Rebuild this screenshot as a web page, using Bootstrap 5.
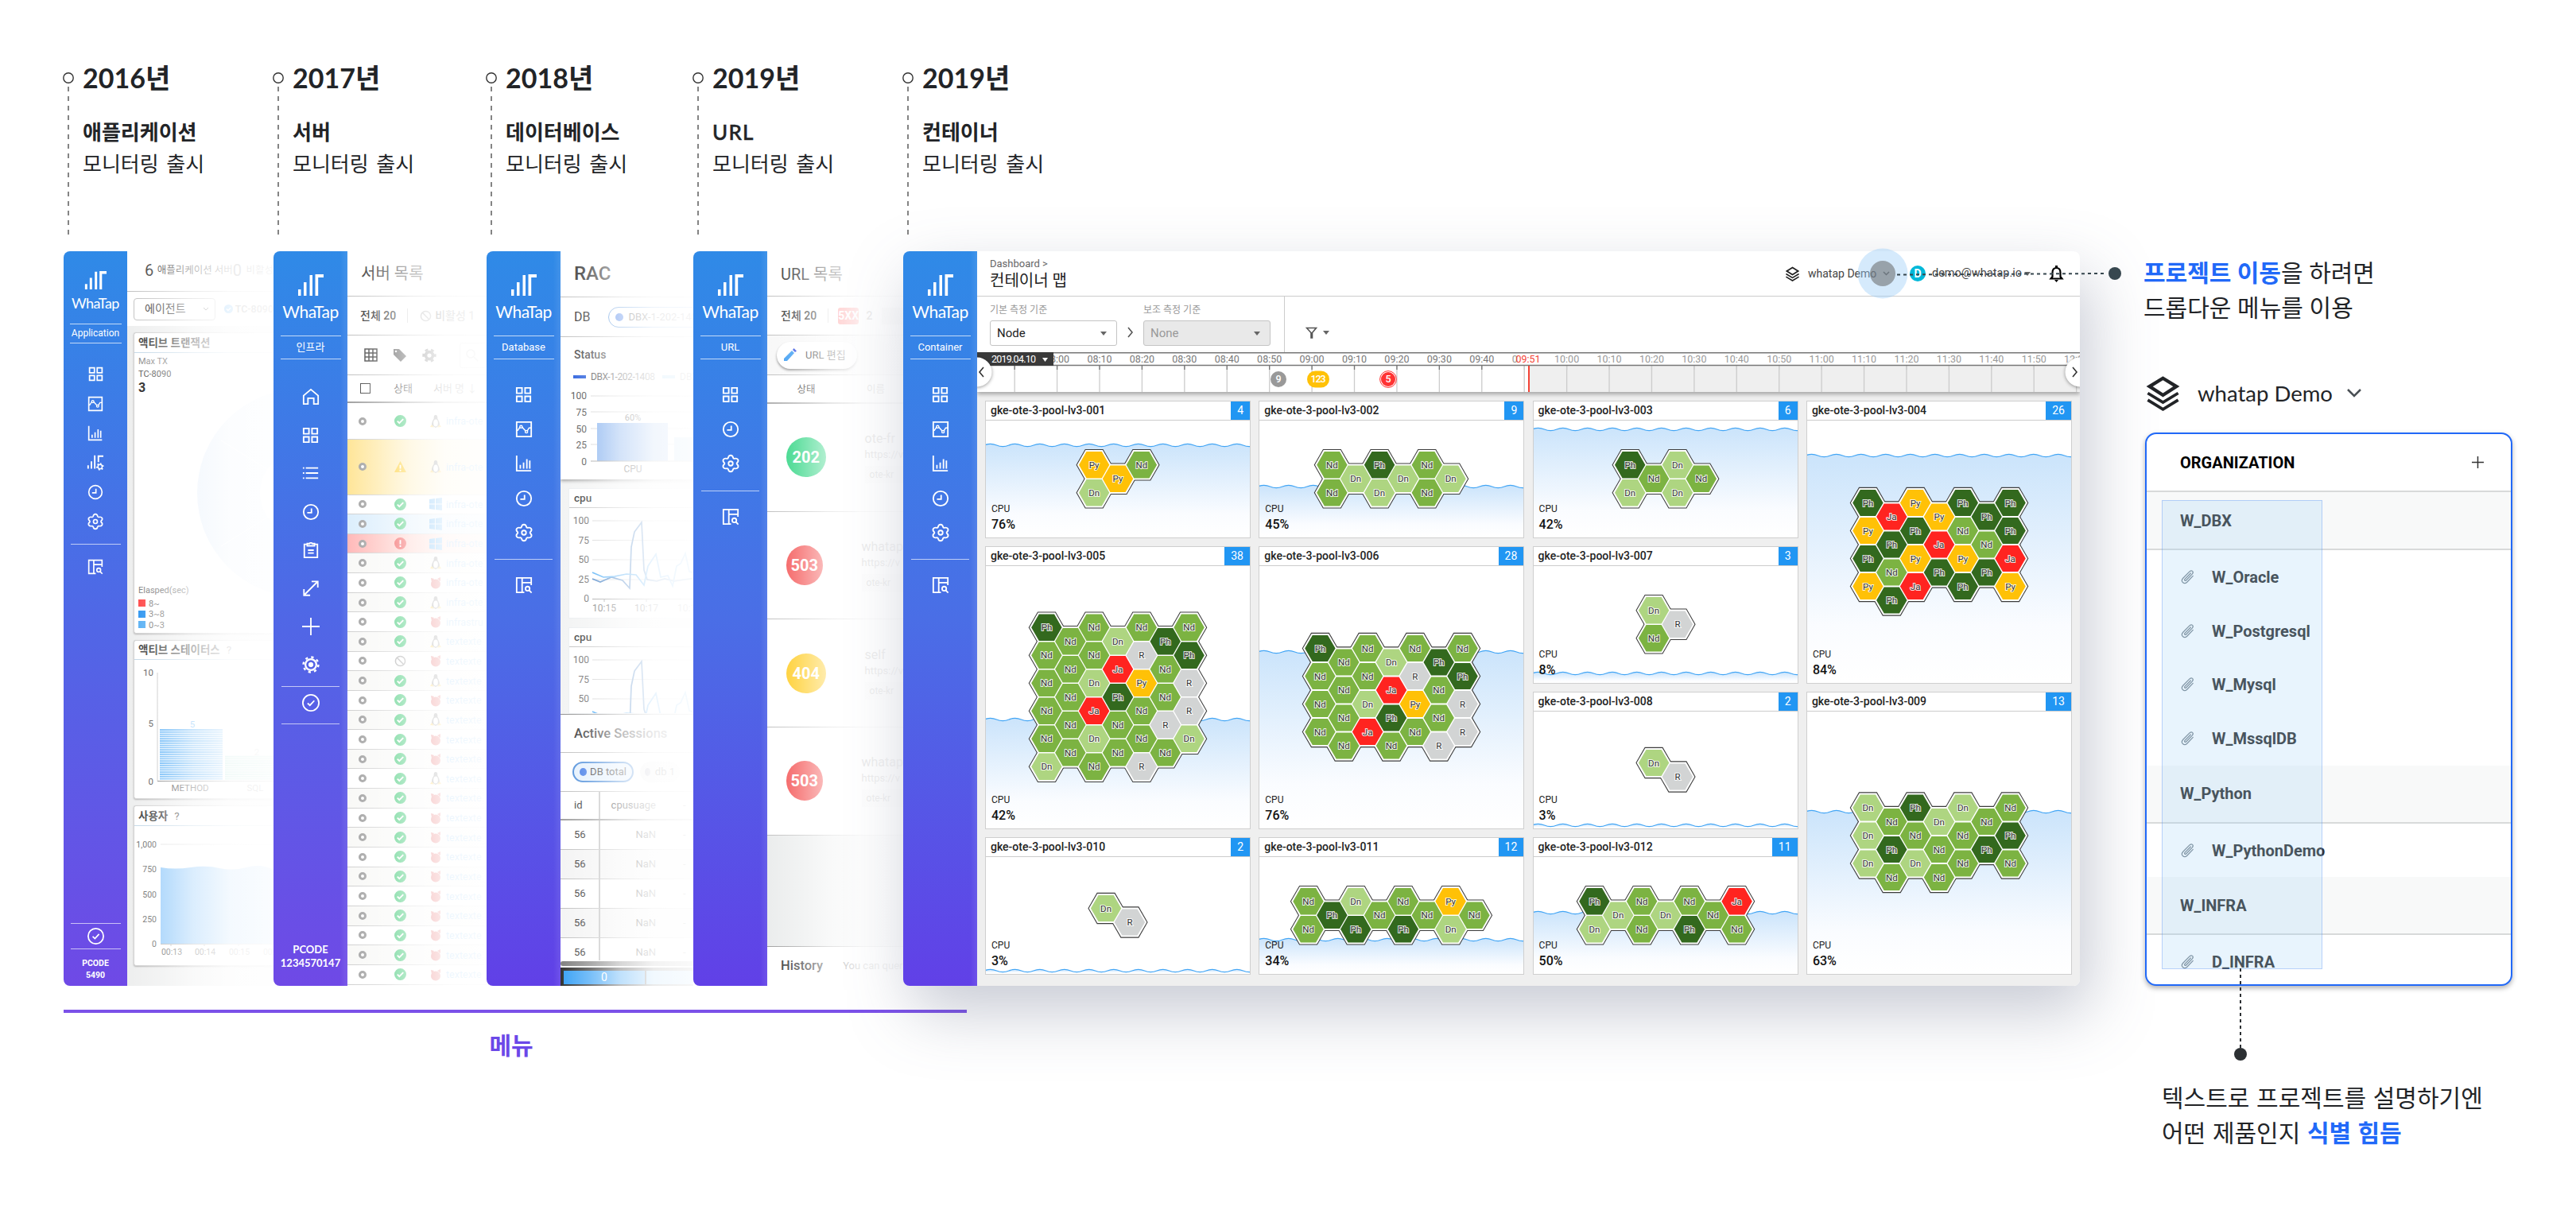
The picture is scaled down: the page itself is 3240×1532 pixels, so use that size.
<!DOCTYPE html>
<html lang="ko">
<head>
<meta charset="utf-8">
<title>WhaTap</title>
<link href="https://cdn.jsdelivr.net/npm/bootstrap@5.3.0/dist/css/bootstrap.min.css" rel="stylesheet">
<style>
html,body{width:3240px;height:1532px;overflow:hidden;background:#fff}
body{font-family:Roboto,"Noto Sans CJK KR",sans-serif;font-size:14px;line-height:1.2;color:#222;white-space:nowrap}
svg{display:block;flex:none}
.copy{font-family:Lato,"Noto Sans CJK KR",sans-serif;color:#222427}
.blue{color:#2169f8}
/* release history */
.history{height:316px;padding:0 0 0 80px}
.release{position:relative;padding:0 0 0 24px}
.release svg{position:absolute;left:-1px;top:90px}
.year{font-size:34px;font-weight:700;line-height:40px;margin-top:78px}
.prod{font-size:26px;font-weight:700;line-height:40px;margin-top:28px}
.prod.latin{letter-spacing:1.2px;font-weight:500;-webkit-text-stroke:.5px}
.rel-txt{font-size:26px;line-height:40px;word-spacing:3px}
/* product panels */
.stage{height:924px;padding-left:80px}
.panel{height:924px;flex:none}
.side{width:93px;flex:none;color:#fff;border-radius:8px 0 0 8px;background:linear-gradient(90deg,transparent 84px,rgba(255,255,255,.09)),linear-gradient(#2f8ae7,#4a6ee6 50%,#6140e7);font-size:13px;overflow:hidden}
.side.violet{background:linear-gradient(90deg,transparent 84px,rgba(255,255,255,.09)),linear-gradient(#2f8ae7,#5067e6 50%,#6f49e6)}
.side.slim{width:80px;font-size:12px}
.logo{margin-top:29px}.slim .logo{margin-top:25px}
.brand{font-family:Lato,sans-serif;font-size:21px;line-height:40px;letter-spacing:-.5px}
.slim .brand{font-size:18px;line-height:34px}
.kind{width:76px;height:30px;margin-top:10px;border:solid rgba(255,255,255,.7);border-width:1px 0;line-height:28px;text-align:center}
.slim .kind{width:65px;height:25px;line-height:22px;margin-top:9px}
.icons{margin-top:23px}
.slim .icons{margin-top:20px}
.rule-x{width:73px;height:1px;background:rgba(255,255,255,.65);flex:none}
.slim .rule-x{width:63px}
.pane{flex:1;min-width:0;overflow:hidden;position:relative;background:#fff}
.fade-over::after{content:"";position:absolute;inset:0;background:linear-gradient(90deg,rgba(255,255,255,.08),rgba(255,255,255,.36) 22%,rgba(255,255,255,.7) 45%,rgba(255,255,255,.91) 70%,rgba(255,255,255,.96))}
.line-b{border-bottom:1px solid #bbb}
.greybg{background:#eceded}
.tile{background:#fff;border:1px solid #ccc;border-radius:3px 0 0 3px;box-shadow:0 1px 2px #aaa;margin-left:8px;border-right:0}
.tile-h{height:25px;padding-left:5px;border-bottom:1px solid #bcd3e4;font-weight:700;font-size:13.5px}
.srow{height:24.65px;border-bottom:1px solid #ccc;padding-left:14px}
.srow:nth-child(even){background:#f8f8f6}
.ring{width:9px;height:9px;border:3px solid #999;border-radius:50%;margin-right:35px;flex:none;background:#fff}
.pill{height:26px;border:1px solid #3b82d6;border-radius:13px;padding:0 8px;gap:6px}
.pill i{width:10px;height:10px;border-radius:50%;background:#2b6be4}
.codedot{width:50px;height:50px;border-radius:50%;color:#fff;font-weight:700;font-size:20px}
/* container map */
.mainp{width:1480px;position:relative;border-radius:8px;box-shadow:12px 32px 80px rgba(90,100,130,.34)}
.mainp .pane{border-radius:0 8px 8px 0;background:#efefef}
.topbar{height:57px;background:#fff;border-bottom:1px solid #ccc;padding:0 20px 0 16px}
.filters{height:70px;background:#fff;padding-left:16px}
.pick{width:160px;height:32px;border:1px solid #c4c4c4;border-radius:3px;padding:0 12px 0 8px;font-size:15px}
.pick.off{background:#e9e9e9;color:#999}
.caret{width:0;height:0;border:4px solid transparent;border-top:5px solid #666;border-bottom:0}
.ruler{height:50px;box-shadow:0 3px 5px rgba(0,0,0,.3);position:relative;background:#fff}
.hexgrid{display:grid;grid-template-columns:repeat(4,334px);grid-template-rows:repeat(4,172.5px);gap:10.5px 10.3px;padding:11px 10px}
.hexcard{border:1px solid #cfcfcf;background:#fff;position:relative;overflow:hidden}
.hexhead{height:24px;border-bottom:1px solid #ccc;font-size:14px;font-weight:500;padding-left:6px}
.cnt{background:#2196f3;color:#fff;height:23px;line-height:23px;padding:0 8px;font-weight:400}
.cpu{position:absolute;left:7px;bottom:6px;font-size:12px;line-height:20px}
.cpu b{display:block;font-size:16px;font-weight:500;color:#111}
.marker-line{position:absolute;left:1200px;top:-6px}
/* right column */
.rightcol{margin-left:82px;width:462px}
.note{font-size:30px;line-height:43.5px}
.org{border:2px solid #2169f8;border-radius:14px;height:696px;margin-top:24px;overflow:hidden;position:relative;box-shadow:0 3px 6px rgba(0,0,0,.3);font-size:20px;font-weight:700;background:#fff}
.org>div{padding-left:42px}
.grp{height:73px;background:#f8f9f9;border-bottom:2px solid #d8dada;color:#333}
.itm{height:67.7px;color:#333;gap:20px}
.org .hl{position:absolute;left:19px;top:83px;width:202px;height:590px;padding:0;background:rgba(150,205,248,.22);border:1px solid rgba(35,104,245,.25)}
.leader{margin-left:112px;margin-top:-22px;position:relative}
.menu-line{width:1136px;height:4px;background:#7b51e8;margin:30px 0 0 80px}
.menu-txt{width:1136px;margin:16px 0 0 75px;font-size:30px;font-weight:700;color:#6b48e8;text-align:center;line-height:48px}
</style>
<script src="https://cdn.jsdelivr.net/npm/bootstrap@5.3.0/dist/js/bootstrap.bundle.min.js"></script>
</head>
<body>
<svg width="0" height="0" class="position-absolute">
<defs>
<linearGradient id="water" x1="0" y1="0" x2="0" y2="1"><stop offset="0" stop-color="#cbe4fb"/><stop offset=".75" stop-color="#fafcff"/><stop offset="1" stop-color="#fff"/></linearGradient>
<g id="s-grid" fill="none" stroke="currentColor" stroke-width="2"><path d="M3 3h7v7H3zM14 3h7v7h-7zM3 14h7v7H3zM14 14h7v7h-7z"/></g>
<g id="s-wave" fill="none" stroke="currentColor" stroke-width="2"><path d="M2 2h20v20H2z"/><path stroke-width="1.6" d="M2 13.5h1.500l3-4.500M9.500 9l4.500 5M16.600 14l2.400-4h3"/><circle cx="8" cy="8.500" r="1.700" stroke-width="1.500"/><circle cx="15.400" cy="15.300" r="1.700" stroke-width="1.500"/></g>
<g id="s-bars" fill="none" stroke="currentColor" stroke-width="2"><path d="M2 1v21h20M7 19v-5M11.500 19v-8.500M16 19V6M20 19V8"/></g>
<g id="s-bargear" fill="none" stroke="currentColor" stroke-width="2.300"><path d="M1 21v-5M6 21V10M11 21V1M16.500 11V2.100H24"/><circle cx="19" cy="18" r="3.200" stroke-width="1.800"/><path stroke-width="2.200" stroke-dasharray="2.100 2.700" d="M19 13.400a4.600 4.600 0 1 1 0 9.200a4.600 4.600 0 1 1 0-9.200"/></g>
<g id="s-clock" fill="none" stroke="currentColor" stroke-width="2"><circle cx="12" cy="12" r="10"/><path d="M12.800 7v6H7"/></g>
<g id="s-gear" fill="none" stroke="currentColor" stroke-width="2"><path stroke-linejoin="round" d="M8.600 4.200Q9.200 .8 12 .8t3.400 3.400q.4 1.100 1.600 1.200 3.600-.9 5 1.100 1.300 2.500-1.400 4.600-.6.900 0 1.800 2.700 2.100 1.400 4.600-1.400 2-5 1.100-1.200.1-1.600 1.200-.6 3.400-3.400 3.400t-3.400-3.400q-.4-1.100-1.600-1.200-3.600.9-5-1.100-1.300-2.500 1.400-4.600.6-.9 0-1.800Q.7 9 2 6.500q1.400-2 5-1.100 1.200-.1 1.600-1.200z"/><circle cx="12" cy="12" r="3"/></g>
<g id="s-report" fill="none" stroke="currentColor" stroke-width="2"><path d="M12.500 22H2V2h20v10M9.500 2v20M9.500 8.500H22M19 19l3.500 3.500"/><circle cx="17" cy="16.800" r="2.900"/></g>
<g id="s-home" fill="none" stroke="currentColor" stroke-width="2"><path d="M2 22V10.500L12 2l10 8.500V22h-6v-8H8v8z"/></g>
<g id="s-list" fill="none" stroke="currentColor" stroke-width="2"><path d="M1 5h2M5 5h17M1 12h2M5 12h17M1 19h2M5 19h17"/></g>
<g id="s-clip" fill="none" stroke="currentColor" stroke-width="2"><path d="M7 4H3v18h18V4h-4M7 6V3h3l1-1h2l1 1h3v3zM8 12h8M8 16h8"/></g>
<g id="s-arrows" fill="none" stroke="currentColor" stroke-width="2"><path d="M3 21L21 3M13 2.500h8.500V11M2.500 13v8.500H11"/></g>
<g id="s-plus" fill="none" stroke="currentColor" stroke-width="2"><path d="M12 0v24M0 12h24"/></g>
<g id="s-cog" fill="none" stroke="currentColor"><circle cx="12" cy="12" r="7.500" stroke-width="2.500"/><circle cx="12" cy="12" r="3" fill="currentColor"/><circle cx="12" cy="12" r="10.300" stroke-width="2.600" stroke-dasharray="3.500 4.590"/></g>
<g id="s-check" fill="none" stroke="currentColor" stroke-width="2"><circle cx="12" cy="12" r="11"/><path d="M7.500 12.500l3.200 3 6-6.500"/></g>
<g id="s-ok"><circle cx="8" cy="8" r="8" fill="#1fc05e"/><path d="M4 8.200l2.700 2.700L12 5.500" fill="none" stroke="#fff" stroke-width="2"/></g>
<g id="s-ban" fill="none" stroke="#999" stroke-width="1.600"><circle cx="8" cy="8" r="6.500"/><path d="M3.500 3.500l9 9"/></g>
<g id="s-warn"><path d="M8 0l8 15H0z" fill="#ffc400"/><path d="M8 5v5M8 11.500v2" stroke="#fff" stroke-width="2"/></g>
<g id="s-err"><circle cx="8" cy="8" r="8" fill="#f02c2c"/><path d="M8 3.500v5.500M8 10.500v2.200" stroke="#fff" stroke-width="2"/></g>
<g id="s-linux"><path d="M8 0c-2 0-2.500 2-2.300 4.500C4 7 3 9.500 3 13l5 3 5-3c0-3.500-1-6-2.700-8.500C10.500 2 10 0 8 0z" fill="#555"/><ellipse cx="8" cy="10" rx="2.900" ry="4.500" fill="#fff"/><path d="M1 15l2-3 3 3.500zM15 15l-2-3-3 3.500z" fill="#fb0"/></g>
<g id="s-win"><path d="M0 2l7-1v6.500H0zM8 .9L16 0v7.500H8zM0 8.500h7V15l-7-1zM8 8.500h8V16l-8-1z" fill="#2196f3"/></g>
<g id="s-pig"><circle cx="8" cy="9.500" r="6" fill="#d22"/><path d="M2 2l4 1-3 4zM14 1l-4 2 4 3z" fill="#d22"/></g>
<g id="s-layers" fill="none" stroke="currentColor"><path stroke-width="2.300" d="M12 2l9 5.500-9 5.800-9-5.800z"/><path stroke-width="2" d="M1.800 12l10.200 6.200L22.200 12M1.800 16.600L12 22.800l10.200-6.200"/></g>
<g id="s-paper" fill="none" stroke="#7b8790" stroke-width="1.500" stroke-linecap="round"><path d="M16 6l-9 9.200c-1 1.300.5 2.800 1.800 1.800l9.700-10c2.800-3.500-1-6.300-3.800-3.800L4.500 13.500c-4.500 5 1.500 10 6 6L19.500 10"/></g>
</defs></svg>

<div class="history d-flex copy" id="history"></div>

<main class="stage d-flex">
  <section class="panel d-flex" style="width:264px"><aside data-side="0"></aside>
    <div class="pane fade-over greybg">
      <div class="bg-white line-b d-flex align-items-center" style="height:51px;padding:0 0 3px 22px"><span style="font-size:20px;width:18px">6</span><span style="font-size:12.500px;width:100px">애플리케이션 서버</span><span style="font-size:20px;width:19px">0</span><span style="font-size:12.500px">비활성</span></div>
      <div class="bg-white d-flex align-items-center" style="height:43px;padding-left:8px"><div class="d-flex align-items-center justify-content-between" style="width:115px;height:28px;border:1px solid #bbb;border-radius:4px;padding:0 7px 0 13px"><span>에이전트</span><svg width="8" height="5"><path d="M1 1l3 3 3-3" fill="none" stroke="#555"/></svg></div><svg style="margin-left:11px" width="11" height="11" viewBox="0 0 16 16"><circle cx="8" cy="8" r="8" fill="#2196f3"/><path d="M4 8l3 3 5-5" fill="none" stroke="#fff" stroke-width="2"/></svg><b style="font-size:12.500px;font-weight:500;margin-left:3px">TC-8090</b></div>
      <div class="tile" style="height:379px;margin-top:8px"><div class="tile-h d-flex align-items-center">액티브 트랜잭션</div>
        <svg width="176" height="352" font-size="11" fill="#333"><circle cx="210" cy="176" r="131" fill="#dceafa"/><circle cx="210" cy="176" r="52" fill="#fff"/><path d="M109 110l64 40M109 243l64-40" stroke="#fff"/><text x="5" y="14" fill="#777">Max TX</text><text x="5" y="30">TC-8090</text><text x="5" y="49" font-size="16" font-weight="700" fill="#000">3</text><text x="5" y="302" fill="#666">Elasped(sec)</text><path d="M5 310h9v9H5z" fill="#ff2a2a"/><path d="M5 324h9v9H5z" fill="#0b84ee"/><path d="M5 337h9v9H5z" fill="#3fa4f2"/><text x="18" y="319" fill="#666">8~</text><text x="18" y="332" fill="#666">3~8</text><text x="18" y="346" fill="#666">0~3</text></svg></div>
      <div class="tile" style="height:200px;margin-top:8px"><div class="tile-h d-flex align-items-center" style="height:24px">액티브 스테이터스 <span class="fw-normal ms-2">?</span></div>
        <svg width="176" height="174" font-size="11.500" fill="#333"><g text-anchor="end"><text x="24" y="20">10</text><text x="24" y="84">5</text><text x="24" y="157">0</text></g><path d="M29 16v136" stroke="#bbb"/><g id="stripes"></g><path d="M29 152.500h147" stroke="#666"/><g text-anchor="middle"><text x="73" y="85" fill="#4aa8f5">5</text><text x="154" y="120" fill="#999">2</text><text x="70" y="165">METHOD</text><text x="152" y="165">SQL</text></g></svg></div>
      <div class="tile" style="height:202px;margin-top:8px"><div class="tile-h d-flex align-items-center">사용자 <span class="fw-normal ms-2">?</span></div>
        <svg width="176" height="174" font-size="10.500" fill="#555"><g text-anchor="end"><text x="28" y="27">1,000</text><text x="28" y="58">750</text><text x="28" y="90">500</text><text x="28" y="121">250</text><text x="28" y="152">0</text></g><path d="M33 23h143M33 55h143M33 86h143M33 117h143" stroke="#ddd"/><path d="M33 52q18 3 38 0t36 1 34-1 34 3v93H33z" fill="#86c4fa"/><path d="M33 148.500h143M46 148v3M88 148v3M131 148v3" stroke="#aaa" fill="none"/><g text-anchor="middle"><text x="47" y="162">00:13</text><text x="89" y="162">00:14</text><text x="132" y="162">00:15</text><text x="175" y="162">00:16</text></g></svg></div>
    </div></section>

  <section class="panel d-flex" style="width:268px"><aside data-side="1"></aside>
    <div class="pane fade-over">
      <div class="line-b d-flex align-items-center" style="height:57px;padding-left:17px;font-size:20px">서버 목록</div>
      <div class="line-b d-flex align-items-center" style="height:49px;padding-left:16px;font-weight:500">전체 20<span style="width:1px;height:18px;background:#ccc;margin:0 15px 0 14px"></span><svg width="15" height="15" viewBox="0 0 16 16"><use href="#s-ban"/></svg><span class="ms-1">비활성 1</span></div>
      <div class="line-b d-flex align-items-center" style="height:50px;padding-left:21px;gap:19px"><svg width="17" height="17" viewBox="0 0 17 17" fill="none" stroke="#333" stroke-width="1.500"><path d="M1 1h15v15H1zM1 6h15M1 11h15M6 1v15M11 1v15"/></svg><svg width="18" height="18" viewBox="0 0 18 18"><path d="M1 1h7l9 9-7 7-9-9z" fill="#444"/><circle cx="4" cy="4" r="1.300" fill="#fff"/></svg><svg width="18" height="18" viewBox="0 0 24 24"><circle cx="12" cy="12" r="6" fill="none" stroke="#555" stroke-width="5"/><circle cx="12" cy="12" r="9.800" fill="none" stroke="#555" stroke-width="3.500" stroke-dasharray="5.130 5.130" stroke-dashoffset="2.560"/></svg><span style="width:50px;height:32px;border:1px solid #ccc;border-radius:3px;margin-left:10px;padding:7px"><svg width="16" height="16" fill="none" stroke="#999" stroke-width="1.500"><circle cx="6" cy="6" r="5"/><path d="M10 10l5 5"/></svg></span></div>
      <div class="d-flex align-items-center" style="height:35px;padding-left:16px;border-bottom:2px solid #999"><span style="width:13px;height:13px;border:1px solid #333"></span><span style="margin-left:29px;font-size:13px">상태</span><span style="margin-left:26px;font-size:13px">서버 명 ↓</span></div>
      <div id="servers"></div>
    </div></section>

  <section class="panel d-flex" style="width:260px"><aside data-side="2"></aside>
    <div class="pane fade-over" style="background:#f1f2f2">
      <div class="bg-white" style="height:287px;box-shadow:0 2px 4px #999">
        <div class="line-b d-flex align-items-center" style="height:58px;padding-left:17px;font-size:24px;font-weight:500">RAC</div>
        <div class="line-b d-flex align-items-center" style="height:50px;padding-left:17px;font-size:16px">DB<span style="width:1px;height:18px;background:#aaa;margin:0 12px 0 11px"></span><span class="pill d-flex align-items-center" style="font-size:13px;width:160px">
          <i></i><span>DBX-1-202-1408</span></span></div>
        <svg width="167" height="178" font-size="12" fill="#333"><text x="17" y="27" font-size="14" font-weight="500">Status</text><path d="M16 50h16" stroke="#0c49d8" stroke-width="4"/><path d="M128 50h16" stroke="#5bb8f5" stroke-width="4"/><text x="38" y="54" textLength="81">DBX-1-202-1408</text><text x="150" y="54">DBX</text><g text-anchor="end"><text x="33" y="78">100</text><text x="33" y="99">75</text><text x="33" y="120">50</text><text x="33" y="140">25</text><text x="33" y="161">0</text></g><path d="M38 74h130M38 94h130M38 115h130M38 135h130" stroke="#ccc"/><path d="M46 108h89v48H46z" fill="#6fa3ec"/><path d="M143 126h30v30h-30z" fill="#8cc4f0"/><path d="M38 156h130" stroke="#888"/><g text-anchor="middle"><text x="91" y="105" font-size="11">60%</text><text x="91" y="170">CPU</text></g></svg></div>
      <div class="bg-white border border-secondary-subtle" style="margin:11px 0 0 10px;height:164px"><div class="line-b d-flex align-items-center" style="height:24px;padding-left:6px;font-size:13.500px;font-weight:500">cpu</div><svg width="160" height="138" font-size="12" fill="#555" data-cpu></svg></div>
      <div class="bg-white border border-secondary-subtle" style="margin:11px 0 0 10px;height:109px;overflow:hidden"><div class="line-b d-flex align-items-center" style="height:24px;padding-left:6px;font-size:13.500px;font-weight:500">cpu</div><svg width="160" height="84" font-size="12" fill="#555" data-cpu="3"></svg></div>
      <div class="bg-white" style="height:311px;border-top:1px solid #888">
        <div class="line-b d-flex align-items-center" style="height:48px;padding-left:17px;font-size:16.500px;font-weight:500">Active Sessions</div>
        <div class="line-b d-flex align-items-center" style="height:49px;padding-left:15px;gap:8px;font-size:13px"><span class="pill d-flex align-items-center" style="border-width:2px;padding:0 7px;gap:4px;width:77px;background:#e2effc"><i></i>DB total</span><span class="pill d-flex align-items-center" style="background:#eee;border-color:#eee;width:50px;padding:0 5px"><i style="background:#aab"></i>db 1</span></div>
        <div id="sessions" style="font-size:13px;height:212px;overflow:hidden"></div></div>
      <div style="height:6px;background:#777;border-radius:3px 0 0 3px"></div>
      <div class="d-flex" style="height:24px;margin-top:2px;background:#222;padding:4px 0 3px 4px;gap:2px;color:#fff"><span class="text-center" style="width:104px;background:#2a9af5">0</span><span style="width:60px;background:#6bbcf8"></span></div>
    </div></section>

  <section class="panel d-flex" style="width:264px"><aside data-side="3"></aside>
    <div class="pane fade-over" style="background:#e9ebeb">
      <div class="line-b d-flex align-items-center bg-white" style="height:57px;padding:2px 0 0 17px;font-size:20px">URL 목록</div>
      <div class="line-b d-flex align-items-center bg-white" style="height:49px;padding-left:17px;font-weight:500">전체 20<span style="width:1px;height:18px;background:#ccc;margin:0 12px 0 14px"></span><span class="text-center text-white" style="width:34px;height:21px;line-height:21px;background:#f55;border-radius:3px;font-weight:700">5XX</span><span style="margin-left:9px">2</span><span style="width:34px;height:21px;background:#ddd;margin-left:12px"></span></div>
      <div class="line-b d-flex align-items-center" style="height:50px;padding-left:12px;background:#f7f7f7"><div class="d-flex align-items-center bg-white" style="width:101px;height:34px;border-radius:17px;padding-left:9px;gap:11px;box-shadow:0 2px 3px #888;font-size:13px"><svg width="16" height="17"><path d="M0 13L10 3l3 3L4 16H0z" fill="#1e8df0"/><path d="M11 2l1.500-2L16 3.500 14 5z" fill="#13d"/></svg>URL 편집</div></div>
      <div class="d-flex align-items-center bg-white" style="height:36px;border-bottom:2px solid #aaa;font-size:12.500px"><span class="text-center" style="width:98px">상태</span><span style="margin-left:27px">이름</span></div>
      <div id="codes"></div>
      <div style="height:139px"></div>
      <div class="bg-white d-flex align-items-center" style="height:50px;border-top:1px solid #999;padding-left:17px;font-size:16.500px;font-weight:500">History<span style="width:1px;height:18px;background:#ccc;margin:0 12px 0 13px"></span><span style="font-size:13px;font-weight:400">You can query</span></div>
    </div></section>

  <section class="panel mainp d-flex"><aside data-side="4"></aside>
    <div class="pane">
      <div class="topbar d-flex justify-content-between align-items-center">
        <div><div style="font-size:13px;color:#666;line-height:16px;margin-top:2px">Dashboard &gt;</div><div style="font-size:20px;line-height:26px">컨테이너 맵</div></div>
        <div class="d-flex align-items-center"><svg width="19" height="19" viewBox="0 0 24 24"><use href="#s-layers"/></svg><span style="margin-left:10px;width:94px;color:#444">whatap Demo</span><svg width="10" height="6" style="margin-right:24px"><path d="M1 1l3.500 3.500L8 1" fill="none" stroke="#555" stroke-width="1.500"/></svg><span class="rounded-circle text-white text-center fw-bold" style="width:20px;height:20px;line-height:20px;background:#00b8d9">D</span><span style="margin-left:8px;width:116px;color:#444;font-size:14.500px">demo@whatap.io</span><span class="caret" style="margin-right:23px"></span><svg width="19" height="21" viewBox="0 0 19 21"><path d="M9.500 3C5.500 3 4.500 6 4.500 9v5l-2 2.500h14l-2-2.500V9c0-3-1-6-5-6z" fill="none" stroke="#000" stroke-width="2.200"/><path d="M8 0h3v3H8zM7 18h5l-2.500 3z"/></svg></div>
      </div>
      <div class="filters d-flex">
        <div style="padding-top:9px"><div style="font-size:12px;line-height:17px;color:#999;margin-bottom:4px">기본 측정 기준</div><div class="pick d-flex align-items-center justify-content-between">Node<span class="caret"></span></div></div>
        <svg width="33" height="16" style="margin-top:37px"><path d="M14 2l5 6-5 6" fill="none" stroke="#555" stroke-width="1.600"/></svg>
        <div style="padding-top:9px"><div style="font-size:12px;line-height:17px;color:#999;margin-bottom:4px">보조 측정 기준</div><div class="pick off d-flex align-items-center justify-content-between">None<span class="caret"></span></div></div>
        <div style="border-left:1px solid #ccc;margin-left:17px;padding:38px 0 0 26px" class="d-flex gap-2 align-items-start"><svg width="15" height="15"><path d="M1.500 1.500h12l-5 6V14H7V7.500z" fill="none" stroke="#555" stroke-width="1.600"/></svg><span class="caret" style="margin:5px 0 0 -1px"></span></div>
      </div>
      <div class="ruler"><svg id="ruler" width="1387" height="50" font-size="12.500" text-anchor="middle"></svg></div>
      <div class="hexgrid" id="hexgrid"></div>
    </div>
    <svg class="marker-line" width="340" height="70"><circle cx="32" cy="34" r="31.500" fill="#9bcdf9" fill-opacity=".42"/><circle cx="32" cy="34" r="16" fill="#666" fill-opacity=".55"/><path d="M50 35.500L310 34" stroke="#37474f" stroke-width="2" stroke-dasharray="4 4"/><circle cx="324" cy="34" r="8" fill="#37474f"/></svg>
  </section>

  <div class="rightcol">
    <div class="note copy" style="margin:5px 0 0 -2px"><b class="blue">프로젝트 이동</b>을 하려면<br>드롭다운 메뉴를 이용</div>
    <div class="d-flex align-items-center copy" style="margin-top:60px;height:52px"><svg width="45" height="45" viewBox="0 0 24 24"><use href="#s-layers"/></svg><span style="font-size:27.500px;margin-left:21px">whatap Demo</span><svg width="18" height="12" style="margin-left:18px"><path d="M1 2l8 8 8-8" fill="none" stroke="#4a5055" stroke-width="2.500"/></svg></div>
    <div class="org">
      <div class="d-flex align-items-center justify-content-between text-black" style="height:73px;padding-right:34px;border-bottom:2px solid #d8dada">ORGANIZATION<svg width="15" height="15"><path d="M7.500 0v15M0 7.500h15" stroke="#333" stroke-width="1.500"/></svg></div>
      <div class="grp d-flex align-items-center">W_DBX</div>
      <div class="itm d-flex align-items-center"><svg width="20" height="20" viewBox="0 0 24 24"><use href="#s-paper"/></svg>W_Oracle</div>
      <div class="itm d-flex align-items-center"><svg width="20" height="20" viewBox="0 0 24 24"><use href="#s-paper"/></svg>W_Postgresql</div>
      <div class="itm d-flex align-items-center"><svg width="20" height="20" viewBox="0 0 24 24"><use href="#s-paper"/></svg>W_Mysql</div>
      <div class="itm d-flex align-items-center"><svg width="20" height="20" viewBox="0 0 24 24"><use href="#s-paper"/></svg>W_MssqlDB</div>
      <div class="grp d-flex align-items-center">W_Python</div>
      <div class="itm d-flex align-items-center"><svg width="20" height="20" viewBox="0 0 24 24"><use href="#s-paper"/></svg>W_PythonDemo</div>
      <div class="grp d-flex align-items-center">W_INFRA</div>
      <div class="itm d-flex align-items-center"><svg width="20" height="20" viewBox="0 0 24 24"><use href="#s-paper"/></svg>D_INFRA</div>
      <div class="hl"></div>
    </div>
    <svg class="leader" width="18" height="120"><path d="M8 0v106" stroke="#2c3033" stroke-width="2" stroke-dasharray="4 4"/><circle cx="8" cy="108" r="8" fill="#2c3033"/></svg>
    <div class="note copy" style="margin:21px 0 0 21px;word-spacing:1px">텍스트로 프로젝트를 설명하기엔<br>어떤 제품인지 <b class="blue">식별 힘듬</b></div>
  </div>
</main>
<div class="menu-line"></div>
<div class="menu-txt copy">메뉴</div>

<script>
const $ = s => document.querySelector(s);
// release history
[['2016','애플리케이션',264],['2017','서버',268],['2018','데이터베이스',260],['2019','URL',264],['2019','컨테이너',264]].forEach(([y,p,w]) => {
  $('#history').insertAdjacentHTML('beforeend', `<div class="release" style="width:${w}px"><svg width="16" height="206"><circle cx="7" cy="8" r="6.200" fill="#fff" stroke="#333" stroke-width="1.400"/><path d="M7 19v187" stroke="#666" stroke-width="1.600" stroke-dasharray="6 6"/></svg><div class="year">${y}년</div><div class="prod ${p==='URL'?'latin':''}">${p}</div><div class="rel-txt">모니터링 출시</div></div>`);
});
// sidebars
const sides = [
  {cls:'slim violet', kind:'Application', step:37, size:20, icons:'grid wave bars bargear clock gear - report', m:'10px 0 9px', foot:'PCODE<br>5490', fs:'10.5px/15px Roboto', pad:6, check:1},
  {cls:'violet', kind:'인프라', step:48.2, size:22, icons:'home grid list clock clip arrows plus cog - check -', m:'2px 0 -4px', foot:'PCODE<br>1234570147', fs:'13px/17px Lato', pad:20},
  {cls:'', kind:'Database', step:43.3, size:22, icons:'grid wave bars clock gear - report', m:'12px 0 10px'},
  {cls:'', kind:'URL', step:43.3, size:22, icons:'grid clock gear - report', m:'12px 0 10px'},
  {cls:'', kind:'Container', step:43.3, size:22, icons:'grid wave bars clock gear - report', m:'12px 0 10px'}];
const use = (n,s,vb=24) => `<svg width="${s}" height="${s}" viewBox="0 0 ${vb} ${vb}" overflow="visible"><use href="#s-${n}"/></svg>`;
document.querySelectorAll('[data-side]').forEach(el => {
  const d = sides[el.dataset.side], k = d.cls.includes('slim') ? 23 : 27;
  el.className = 'side d-flex flex-column align-items-center ' + d.cls;
  el.innerHTML = `<svg class="logo" width="${k*33/27}" height="${k}" viewBox="0 0 33 27"><path fill="#fff" d="M1 19h3.500v8H1zM8 10h3.500v17H8zM15.500 1h3.500v26h-3.500zM22.500 0H33v4h-6.800v23h-3.700z"/></svg><div class="brand">WhaTap</div><div class="kind">${d.kind}</div><div class="icons d-flex flex-column align-items-center">` +
    d.icons.split(' ').map(n => n === '-' ? `<div class="rule-x" style="margin:${d.m}"></div>` : `<div class="d-flex align-items-center" style="height:${d.step}px">${use(n, n==='grid'?d.size+1:d.size)}</div>`).join('') + '</div>' +
    (d.foot ? `<div class="mt-auto d-flex flex-column align-items-center" style="padding-bottom:${d.pad}px">` + (d.check ? `<div class="rule-x"></div><div style="padding:5px">${use('check',21)}</div><div class="rule-x" style="margin-bottom:10px"></div>` : '') + `<div class="text-center" style="font:bold ${d.fs}">${d.foot}</div></div>` : '');
});
// striped bars of the active status chart
let st = '';
for (let y = 88; y < 151; y += 2.8) st += `<path d="M32 ${y}h79" stroke="#4aa8f5" stroke-width="1.900"/>` + (y > 121 ? `<path d="M114 ${y}h62" stroke="#7fd6c0" stroke-width="1.900"/>` : '');
$('#stripes').innerHTML = st;
// server list
const os = 'win win win linux pig linux pig linux pig linux pig linux pig pig linux pig pig pig pig pig pig pig pig pig pig'.split(' ');
const srv = (o, s, t, style='') => `<div class="srow d-flex align-items-center" style="${style}"><span class="ring" style="width:10px;height:10px"></span>${use(s,15,16)}<span style="width:29px"></span>${use(o,16,16)}<span style="margin-left:5px;color:#2196f3;font-size:12.500px">${t}</span></div>`;
$('#servers').innerHTML = srv('linux','ok','infra-ote','height:46px') + srv('linux','warn','infra-ote','height:69.500px;background:linear-gradient(90deg,#ffe38f,#fff3cc)') +
  os.map((o,i) => srv(o, i===2?'err':i===8?'ban':'ok', i<6?'infra-ote':i===6?'infrastru':'textexte', i===1?'background:#d9edfc':i===2?'background:linear-gradient(90deg,#ffb3b3,#ffd9c8)':'')).join('');
// cpu line charts; the attribute limits the number of axis labels
document.querySelectorAll('[data-cpu]').forEach(s => { const n = +s.dataset.cpu || 5; s.innerHTML = `<g text-anchor="end">${[100,75,50,25,0].slice(0,n).map((v,i)=>`<text x="25" y="${20+i*24.600}">${v}</text>`).join('')}</g><path d="M29 16h131M29 40.500h131M29 65h131M29 90h131" stroke="#ccc"/><path d="M29 114.500h131M44 114v4M97 114v4" stroke="#888" fill="none"/><g fill="none" stroke-width="1.700"><path stroke="#1e66b8" d="M29 89l10 4 14-6 14 4 9 10 2-52 4-19 9-12 3 60 4 12 12 2 10-3 12 3 26-4"/><path stroke="#2196f3" d="M29 81l14 6 14-1 15-3 12 1 10 13 5-24 10-15 6 29 9-2 6 13 5-25 5-3 6-13 5 23 8 2"/></g>` + (n === 5 ? `<g text-anchor="middle"><text x="44" y="130">10:15</text><text x="97" y="130">10:17</text><text x="151" y="130">10:19</text></g>` : ''); });
// sessions table
const sess = (a,b,h,c) => `<div class="d-flex align-items-center line-b" style="height:${h}px;padding-left:17px;${c}"><span style="width:31px">${a}</span><span class="h-100" style="width:2px;background:#bbb"></span><span class="text-end" style="width:70px">${b}</span><span style="width:34px"></span>-</div>`;
$('#sessions').innerHTML = sess('id','cpusuage',36,'border-bottom:2px solid #999') + [0,1,2,3,4].map(i => sess('56','NaN',37,i%2?'background:#f3f3f3':'')).join('');
// url status codes
$('#codes').innerHTML = [['202','#0fce6f','ote-fr'],['503','#f23b3b','whatap'],['404','#ffc400','self'],['503','#f23b3b','whatap']].map(([c,b,t]) =>
  `<div class="bg-white line-b d-flex align-items-center" style="height:135.700px;padding-left:24px"><span class="codedot d-flex align-items-center justify-content-center" style="background:${b}">${c}</span><div style="margin-left:49px;line-height:20px"><div style="font-size:16px">${t}</div><div style="font-size:13px">https://v</div><div style="font-size:12px;background:#eee;padding:1px 6px;margin-top:4px">ote-kr</div></div></div>`).join('');
// time ruler
let r = '<path d="M694 0h693v50H694z" fill="#efefef"/><path d="M0 0h1387v16H0z" fill="#fff"/>';
for (let i = -2; i < 24; i++) {
  const x = 154 + i*53.420, m = 490 + i*10, l = String(Math.floor(m/60)).padStart(2,'0') + ':' + String(m%60).padStart(2,'0');
  r += `<path d="M${x} 17v33" stroke="#ccc" stroke-width="1.300"/><path d="M${x} 17v5" stroke="${i<10?'#777':'#ccc'}" stroke-width="1.300"/>` + (i > -2 ? `<text x="${x}" y="12.500" fill="${i<10?'#777':'#999'}">${l}</text>` : '');
}
r += `<path d="M0 .8h1387M0 16.500h1387" stroke="#777" stroke-width="1.500"/><path d="M680 2h28v13h-28z" fill="#fff"/><text x="693" y="12.500" fill="#f44336">09:51</text><path d="M694 17v33" stroke="#f44336" stroke-width="2"/><path d="M0 0h96v17H0z" fill="#3a3a3a"/><text x="46" y="13" fill="#fff" textLength="56">2019.04.10</text><path d="M82 7h7l-3.500 5z" fill="#fff"/>
<g fill="#fff" font-weight="500"><circle cx="379" cy="34" r="10" fill="#999"/><text x="379" y="38">9</text><rect x="415" y="23.500" width="28" height="21" rx="10.500" fill="#ffc107"/><text x="429" y="38" textLength="19">123</text><circle cx="517" cy="34" r="10.400" fill="#fff" stroke="#f33" stroke-width="1"/><circle cx="517" cy="34" r="9" fill="#f33"/><text x="517" y="38">5</text></g>
<g fill="#fff" style="filter:drop-shadow(0 1px 2px rgba(0,0,0,.4))"><circle cx="0" cy="25" r="18.500"/><circle cx="1387" cy="25" r="18.500"/></g><path d="M8 19l-5 6 5 6M1378 19l5 6-5 6" fill="none" stroke="#333" stroke-width="1.600"/>`;
$('#ruler').innerHTML = r;
// hexagon cards: columns are separated by "|"
const col = {Ph:'#33691e',Nd:'#7cb342',Dn:'#aed581',Py:'#ffc107',Ja:'#ff2420',R:'#d2d4d4'};
const cards = [
 ['001',4,76,'1/1',1,55,'Py Dn|Py|Nd'],['002',9,45,'1/2',1,107,'Nd Nd|Dn|Ph Dn|Dn|Nd Nd|Dn'],['003',6,42,'1/3',1,35,'Ph Dn|Nd|Dn Dn|Nd'],
 ['004',26,84,'1/4',2,68,'Ph Py Ph Py|Ja Ph Nd Ph|Py Ph Py Ja|Py Ja Ph|Ph Nd Py Ph|Ph Nd Ph|Ph Ph Ja Py'],
 ['005',38,42,'2/1',2,217,'Ph Nd Nd Nd Nd Dn|Nd Nd Nd Nd Nd|Nd Nd Dn Ja Dn Nd|Dn Ja Ph Nd Nd|Nd R Py Nd Nd R|Ph Nd Nd R Nd|Nd Ph R R Dn'],
 ['006',28,76,'2/2',2,132,'Ph Nd Nd Nd|Nd Nd Nd Nd|Nd Nd Dn Ja|Dn Ja Ph Nd|Nd R Py Nd|Ph Nd Nd R|Nd Ph R R'],
 ['007',3,8,'2/3',1,159,'Dn Nd|R'],['008',2,3,'3/3',1,167,'Dn|R'],
 ['009',13,63,'3/4',2,150,'Dn Dn Dn|Nd Ph Nd|Ph Nd Dn|Dn Nd Nd|Dn Nd Nd|Nd Ph|Nd Ph Nd'],
 ['010',2,3,'4/1',1,167,'Dn|R'],['011',12,34,'4/2',1,128,'Nd Nd|Ph|Dn Ph|Nd|Nd Ph|Nd|Py Dn|Nd'],['012',11,50,'4/3',1,94,'Ph Dn|Dn|Nd Nd|Dn|Nd Ph|Nd|Ja Nd']];
const poly = (x,y,R) => [0,1,2,3,4,5].map(k => (x+R*Math.cos(k*Math.PI/3)).toFixed(1)+','+(y+R*Math.sin(k*Math.PI/3)).toFixed(1)).join(' ');
cards.forEach(([n,c,p,pos,span,lv,d]) => {
  const H = span === 2 ? 353.500 : 170.500, cols = d.split('|').map(s => s.split(' ')), top = 24, bodyH = H - top;
  const hs = []; let maxY = 0;
  cols.forEach((a,i) => a.forEach((t,j) => { const y = j*35 + (i%2)*17.500; maxY = Math.max(maxY,y); hs.push([i*29.850, y, t]); }));
  const ox = 166 - (cols.length-1)*29.850/2, oy = bodyH/2 - maxY/2;
  let w = `M-2 ${lv-top}`;
  for (let x = -2, k = 0; x < 340; x += 15.500, k++) w += `q7.750 ${k%2?3.200:-3.200} 15.500 0`;
  const layer = f => hs.map(([x,y,t]) => f(x+ox,y+oy,t)).join('');
  $('#hexgrid').insertAdjacentHTML('beforeend', `<div class="hexcard" style="grid-area:${pos}/span ${span}"><div class="hexhead d-flex align-items-center justify-content-between">gke-ote-3-pool-lv3-${n}<span class="cnt">${c}</span></div><svg width="332" height="${bodyH}" font-size="11.500" text-anchor="middle"><path d="${w}V${bodyH}H-2z" fill="url(#water)"/><path d="${w}" fill="none" stroke="#42a5f5" stroke-width="1.300"/>` +
   layer((x,y) => `<polygon points="${poly(x,y,22.700)}" fill="#3c3c3c"/>`) + layer((x,y) => `<polygon points="${poly(x,y,21.500)}" fill="#fff"/>`) +
   layer((x,y,t) => `<polygon points="${poly(x,y,19.200)}" fill="${col[t]}"/><text x="${x}" y="${y+4}" fill="#333" stroke="#fff" stroke-width="2.200" stroke-opacity=".85" paint-order="stroke">${t}</text>`) +
   `</svg><div class="cpu">CPU<b>${p}%</b></div></div>`);
});
</script>
</body>
</html>
